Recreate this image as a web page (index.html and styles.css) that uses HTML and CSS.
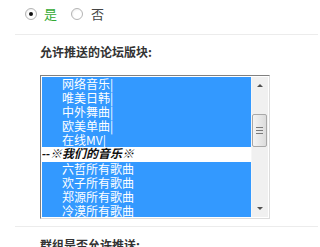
FILE: index.html
```html
<!DOCTYPE html>
<html lang="zh">
<head>
<meta charset="utf-8">
<title>推送设置</title>
<link rel="stylesheet" href="styles.css">
</head>
<body>
<div class="radio-row">
  <label class="radio-item"><span class="radio checked"></span><span class="yes">是</span></label>
  <label class="radio-item"><span class="radio"></span><span class="no">否</span></label>
</div>
<div class="rule"></div>
<div class="field">
  <div class="field-label">允许推送的论坛版块:</div>
  <div class="listbox">
    <div class="options">
      <div class="opt sel">网络音乐|</div>
      <div class="opt sel">唯美日韩|</div>
      <div class="opt sel">中外舞曲|</div>
      <div class="opt sel">欧美单曲|</div>
      <div class="opt sel">在线MV|</div>
      <div class="group">--※我们的音乐※</div>
      <div class="opt sel">六哲所有歌曲</div>
      <div class="opt sel">欢子所有歌曲</div>
      <div class="opt sel">郑源所有歌曲</div>
      <div class="opt sel">冷漠所有歌曲</div>
    </div>
    <div class="scrollbar">
      <div class="sb-btn"><span class="arrow up"></span></div>
      <div class="sb-gap"></div>
      <div class="thumb"><span class="grip"></span><span class="grip"></span><span class="grip"></span></div>
      <div class="sb-rest"></div>
      <div class="sb-btn"><span class="arrow down"></span></div>
    </div>
  </div>
</div>
<div class="rule rule-2"></div>
<div class="field">
  <div class="field-label label-2">群组是否允许推送:</div>
</div>
</body>
</html>
```

FILE: styles.css
```css
html, body {
  margin: 0;
  padding: 0;
  background: #ffffff;
}
body {
  width: 318px;
  height: 247px;
  overflow: hidden;
  font-family: "Noto Sans CJK SC", "Liberation Sans", sans-serif;
  font-size: 12px;
  color: #333333;
}
.radio-row {
  display: flex;
  align-items: center;
  height: 27px;
  padding-left: 25px;
}
.radio-item {
  display: flex;
  align-items: center;
  gap: 7px;
  margin-right: 14px;
  font-size: 13px;
  line-height: 14px;
}
.radio {
  box-sizing: border-box;
  width: 12px;
  height: 12px;
  border-radius: 50%;
  border: 1px solid #b4b4b4;
  background: radial-gradient(circle at 60% 60%, #ffffff 0, #ffffff 45%, #e4e4e4 100%);
  display: flex;
  align-items: center;
  justify-content: center;
}
.radio.checked::after {
  content: "";
  width: 4px;
  height: 4px;
  border-radius: 50%;
  background: #111111;
}
.yes {
  color: #33aa33;
}
.no {
  color: #444444;
  margin-left: 1px;
}
.rule {
  margin-top: 7px;
  margin-left: 15px;
  border-top: 1px solid #ececec;
}
.field {
  padding-left: 40px;
}
.field-label {
  margin-top: 10px;
  font-weight: bold;
  font-size: 12px;
  line-height: 14px;
  color: #333333;
}
.listbox {
  margin-top: 16px;
  width: 226px;
  height: 140px;
  padding: 1px;
  border: 1px solid;
  border-color: #808080 #dcdcdc #dcdcdc #808080;
  display: flex;
  background: #ffffff;
}
.options {
  width: 209px;
  height: 140px;
  overflow: hidden;
}
.opt {
  height: 14px;
  line-height: 14px;
  padding-left: 20px;
  font-size: 12px;
  color: #ffffff;
  white-space: nowrap;
}
.opt.sel {
  background: #3399ff;
}
.group {
  height: 15px;
  line-height: 15px;
  font-family: "Liberation Serif", "Noto Sans CJK SC", serif;
  font-weight: bold;
  font-style: italic;
  font-size: 12px;
  color: #111111;
  white-space: nowrap;
}
.scrollbar {
  width: 17px;
  height: 140px;
  display: flex;
  flex-direction: column;
  background: #f0f0f0;
  box-sizing: border-box;
  border-left: 1px solid #f6f6f6;
}
.sb-btn {
  height: 17px;
  display: flex;
  align-items: center;
  justify-content: center;
}
.arrow {
  width: 0;
  height: 0;
  border-left: 3px solid transparent;
  border-right: 3px solid transparent;
}
.arrow.up {
  border-bottom: 3px solid #505050;
}
.arrow.down {
  border-top: 3px solid #505050;
}
.sb-gap {
  height: 20px;
}
.thumb {
  box-sizing: border-box;
  height: 33px;
  margin: 0 1px 0 0;
  border: 1px solid #a8a8a8;
  border-radius: 2px;
  background: linear-gradient(to right, #f4f4f4, #dcdcdc);
  display: flex;
  flex-direction: column;
  align-items: center;
  justify-content: center;
  gap: 2px;
}
.grip {
  width: 7px;
  height: 1px;
  background: #7a7a7a;
}
.sb-rest {
  flex: 1;
}
.rule-2 {
  margin-top: 7px;
}
.label-2 {
  margin-top: 11px;
}
```
